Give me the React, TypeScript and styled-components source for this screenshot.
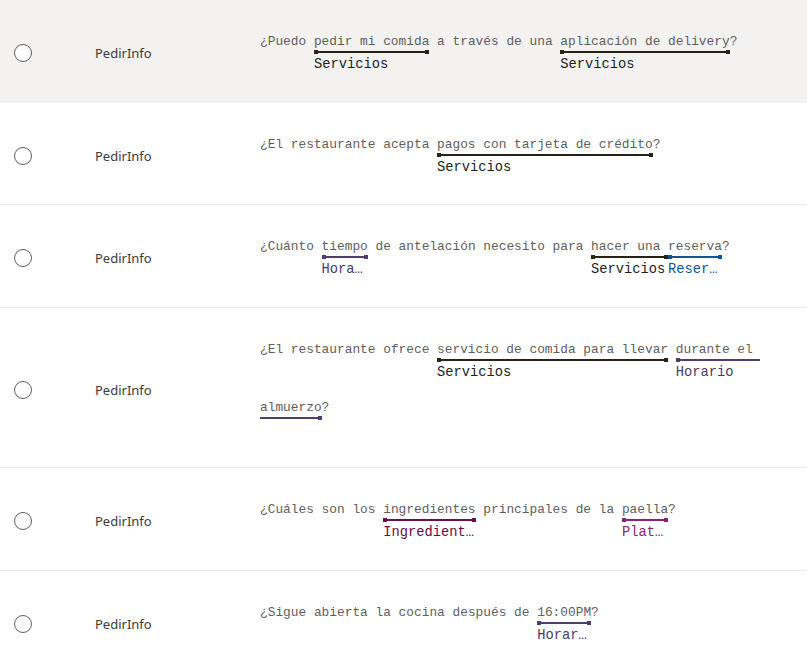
import React from "react";
import styled, { createGlobalStyle } from "styled-components";

const GlobalStyle = createGlobalStyle`
  html, body { margin: 0; padding: 0; background: #ffffff; }
  body { font-family: "Segoe UI", "Noto Sans", "Open Sans", sans-serif; }
`;

type Entity = {
  color: string;
  labelColor: string;
  label?: string;
  capStart?: boolean;
  capEnd?: boolean;
};

type Piece = { text: string; entity?: Entity };

const SERV = { color: "#2a2214", labelColor: "#201f1e" };
const HOR = { color: "#4f3d6e", labelColor: "#4b3a69" };
const RES = { color: "#0b5797", labelColor: "#0b5797" };
const ING = { color: "#6e0f4c", labelColor: "#6b0b44" };
const PLA = { color: "#8c2274", labelColor: "#8c2274" };

const e = (text: string, base: { color: string; labelColor: string }, label?: string, capStart = true, capEnd = true): Piece => ({
  text,
  entity: { ...base, label, capStart, capEnd },
});

const rows: { pieces: Piece[]; active?: boolean }[] = [
  {
    active: true,
    pieces: [
      { text: "¿Puedo " },
      e("pedir mi comida", SERV, "Servicios"),
      { text: " a través de una " },
      e("aplicación de delivery", SERV, "Servicios"),
      { text: "?" },
    ],
  },
  {
    pieces: [
      { text: "¿El restaurante acepta " },
      e("pagos con tarjeta de crédito", SERV, "Servicios"),
      { text: "?" },
    ],
  },
  {
    pieces: [
      { text: "¿Cuánto " },
      e("tiempo", HOR, "Hora…"),
      { text: " de antelación necesito para " },
      e("hacer una ", SERV, "Servicios"),
      e("reserva", RES, "Reser…"),
      { text: "?" },
    ],
  },
  {
    pieces: [
      { text: "¿El restaurante ofrece " },
      e("servicio de comida para llevar", SERV, "Servicios"),
      { text: " " },
      e("durante el ", HOR, "Horario", true, false),
      e("almuerzo", HOR, undefined, false, true),
      { text: "?" },
    ],
  },
  {
    pieces: [
      { text: "¿Cuáles son los " },
      e("ingredientes", ING, "Ingredient…"),
      { text: " principales de la " },
      e("paella", PLA, "Plat…"),
      { text: "?" },
    ],
  },
  {
    pieces: [
      { text: "¿Sigue abierta la cocina después de " },
      e("16:00PM", HOR, "Horar…"),
      { text: "?" },
    ],
  },
];

const List = styled.div`
  display: flex;
  flex-direction: column;
  width: 807px;
`;

const Row = styled.div<{ $active?: boolean }>`
  display: grid;
  grid-template-columns: 95px 165px 547px;
  align-items: center;
  padding: 32px 0 27.5px 0;
  background: ${(p) => (p.$active ? "#f3f2f1" : "#ffffff")};
  border-bottom: 1px solid ${(p) => (p.$active ? "#f3f2f1" : "#edebe9")};
`;

const RadioCell = styled.div`
  display: flex;
  align-items: center;
  padding-left: 14px;
`;

const Radio = styled.span`
  display: block;
  width: 18px;
  height: 18px;
  box-sizing: border-box;
  border-radius: 50%;
  border: 1px solid #605e5c;
  background: #ffffff;
`;

const Intent = styled.div`
  font-family: "Segoe UI", "Noto Sans", "Open Sans", sans-serif;
  font-size: 13px;
  color: #3b3a39;
  line-height: 20px;
`;

const Utterance = styled.div`
  display: flex;
  flex-wrap: wrap;
  align-items: flex-start;
  row-gap: 16px;
`;

const Segment = styled.div`
  display: flex;
  flex-direction: column;
  height: 42px;
`;

const Word = styled.span`
  font-family: "Liberation Mono", "DejaVu Sans Mono", monospace;
  font-size: 12.83px;
  line-height: 20px;
  height: 20px;
  white-space: pre;
  color: #605e5c;
`;

const Bar = styled.div<{ $color?: string }>`
  display: flex;
  align-items: center;
  height: 4px;
  margin-top: -2px;
  color: ${(p) => p.$color ?? "transparent"};
`;

const Line = styled.span`
  flex: 1;
  height: 2px;
  background: currentColor;
`;

const Cap = styled.span`
  width: 4px;
  height: 4px;
  background: currentColor;
`;

const Label = styled.span<{ $color?: string }>`
  display: block;
  width: 0;
  min-width: 100%;
  height: 18px;
  margin-top: 2px;
  font-family: "Liberation Mono", "DejaVu Sans Mono", monospace;
  font-size: 13.75px;
  line-height: 18px;
  white-space: pre;
  color: ${(p) => p.$color ?? "#201f1e"};
`;

const splitWords = (t: string) => t.match(/\s+|\S+\s*/g) ?? [];

function PieceView({ piece }: { piece: Piece }) {
  const ent = piece.entity;
  if (ent) {
    return (
      <Segment>
        <Word>{piece.text}</Word>
        <Bar $color={ent.color}>
          {ent.capStart && <Cap />}
          <Line />
          {ent.capEnd && <Cap />}
        </Bar>
        <Label $color={ent.labelColor}>{ent.label ?? ""}</Label>
      </Segment>
    );
  }
  return (
    <>
      {splitWords(piece.text).map((w, i) => (
        <Segment key={i}>
          <Word>{w}</Word>
          <Bar />
          <Label />
        </Segment>
      ))}
    </>
  );
}

export default function App() {
  return (
    <>
      <GlobalStyle />
      <List>
        {rows.map((r, i) => (
          <Row key={i} $active={r.active}>
            <RadioCell>
              <Radio />
            </RadioCell>
            <Intent>PedirInfo</Intent>
            <Utterance>
              {r.pieces.map((p, j) => (
                <PieceView key={j} piece={p} />
              ))}
            </Utterance>
          </Row>
        ))}
      </List>
    </>
  );
}
